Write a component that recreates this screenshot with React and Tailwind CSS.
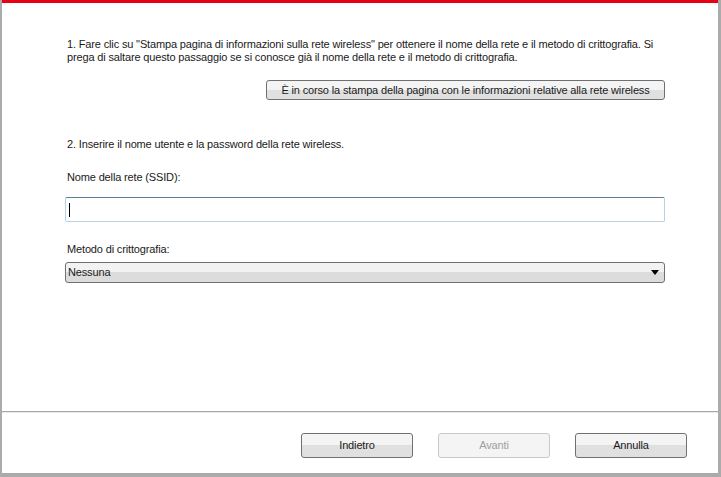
export default function App() {
  const font = { fontFamily: '"Liberation Sans", Arial, sans-serif' };
  return (
    <div
      className="w-[721px] h-[477px] flex flex-col bg-white border-l-2 border-r-[3px] border-b-4 border-[#ababab] text-[11px] tracking-[-0.15px] text-[#1a1a1a] overflow-hidden"
      style={font}
    >
      <div className="h-[3px] bg-[#e60012] shrink-0" />
      <div className="flex-1 flex flex-col pl-[63px] pr-[53px]">
        <p className="mt-[35px] pl-[2px] leading-[13px] whitespace-nowrap">
          1. Fare clic su "Stampa pagina di informazioni sulla rete wireless" per ottenere il nome della rete e il metodo di crittografia. Si
          <br />
          prega di saltare questo passaggio se si conosce già il nome della rete e il metodo di crittografia.
        </p>
        <div className="flex justify-end mt-[16px]">
          <button className="w-[399px] h-[20px] rounded-[3px] border border-[#707070] bg-gradient-to-b from-[#f4f4f4] from-50% to-[#e0e0e0] to-50% text-[11px] leading-none">
            È in corso la stampa della pagina con le informazioni relative alla rete wireless
          </button>
        </div>
        <p className="mt-[38px] pl-[2px] leading-[13px]">2. Inserire il nome utente e la password della rete wireless.</p>
        <p className="mt-[20px] pl-[2px] leading-[13px]">Nome della rete (SSID):</p>
        <div className="mt-[13px] h-[25px] border border-[#b9d1e2] border-t-[#5b7d8f] rounded-[2px] flex items-center pl-[3px]">
          <div className="w-px h-[14px] bg-black" />
        </div>
        <p className="mt-[21px] pl-[2px] leading-[13px]">Metodo di crittografia:</p>
        <div className="mt-[6px] h-[21px] border border-[#707070] rounded-[3px] bg-gradient-to-b from-[#f2f2f2] from-45% to-[#dcdcdc] to-45% flex items-center justify-between pl-[2px] pr-[5px]">
          <span>Nessuna</span>
          <svg width="8" height="5" viewBox="0 0 8 5">
            <path d="M0 0 H8 L4 5 Z" fill="#000" />
          </svg>
        </div>
      </div>
      <div className="h-[2px] border-t border-[#a9a9a9] bg-[#e9e9e9] shrink-0" />
      <div className="h-[60px] flex items-start pt-[20px] pl-[299px] gap-[25px] shrink-0">
        <button className="w-[112px] h-[25px] rounded-[3px] border border-[#707070] bg-gradient-to-b from-[#f4f4f4] from-50% to-[#e0e0e0] to-50%">
          Indietro
        </button>
        <button className="w-[112px] h-[25px] rounded-[3px] border border-[#c8c8c8] bg-[#f4f4f4] text-[#a0a0a0]">
          Avanti
        </button>
        <button className="w-[112px] h-[25px] rounded-[3px] border border-[#707070] bg-gradient-to-b from-[#f4f4f4] from-50% to-[#e0e0e0] to-50%">
          Annulla
        </button>
      </div>
    </div>
  );
}
